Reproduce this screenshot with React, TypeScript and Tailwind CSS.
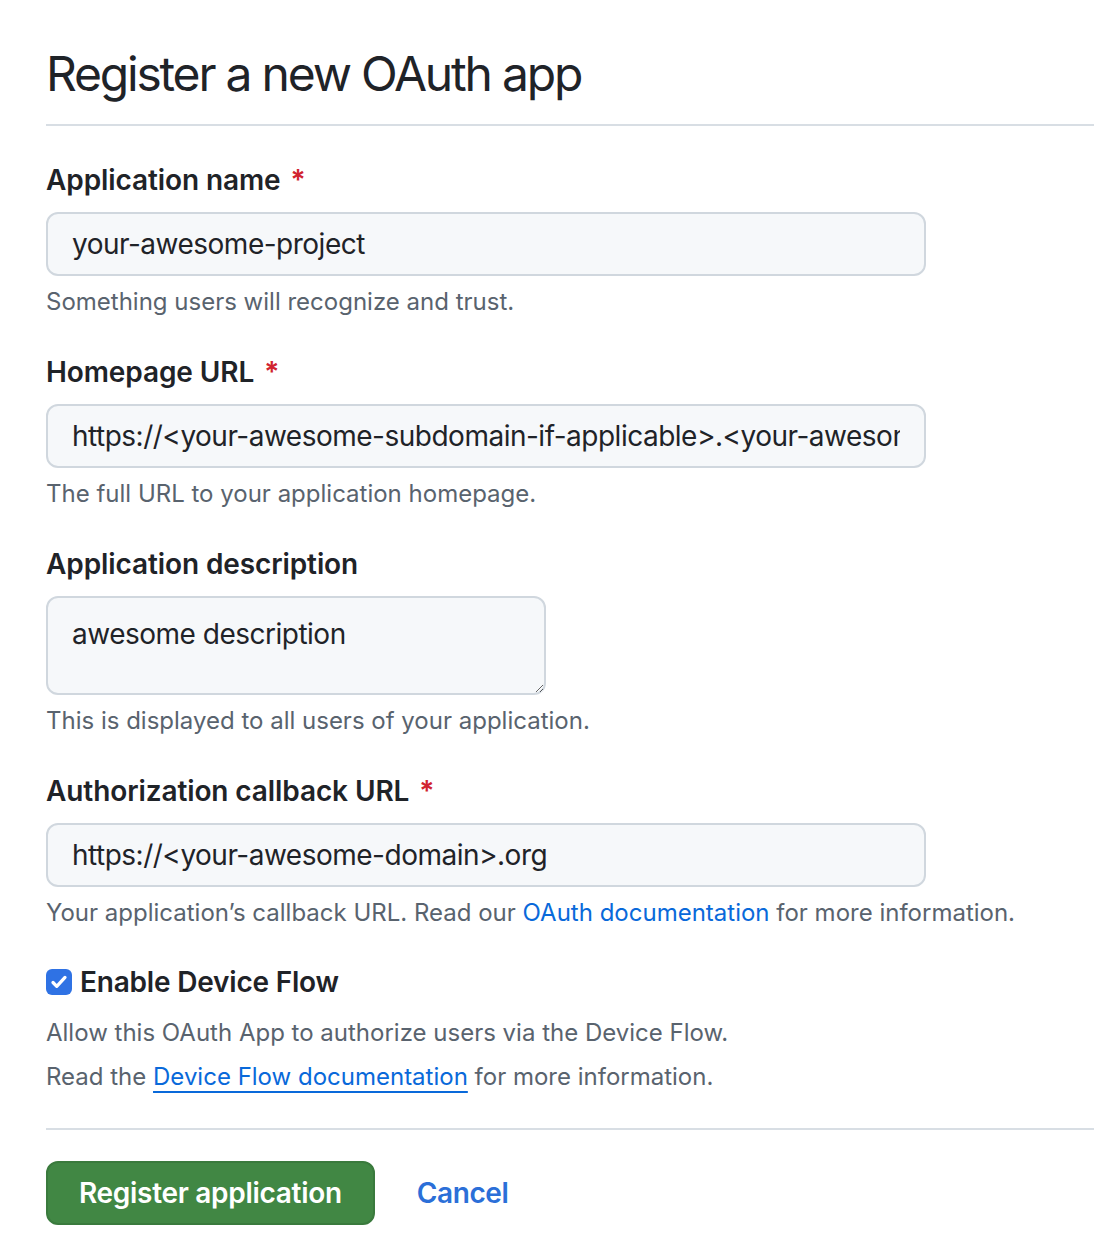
import React from "react";

const font = { fontFamily: "Inter, 'Noto Sans', 'Liberation Sans', sans-serif" };

const Required = () => <span className="ml-[10px] text-[#d1242f]">*</span>;

const Field = ({
  label,
  required,
  value,
  note,
  textarea,
  first,
}: {
  label: string;
  required?: boolean;
  value: string;
  note: React.ReactNode;
  textarea?: boolean;
  first?: boolean;
}) => {
  return (
    <div className={first ? "mt-[34px]" : "mt-[32px]"}>
      <label className="block text-[28px] leading-[40px] font-semibold tracking-[-0.1px] text-[#1f2328]">
        {label}
        {required && <Required />}
      </label>
      {textarea ? (
        <textarea
          readOnly
          defaultValue={value}
          className="mt-[12px] block h-[99px] w-[500px] rounded-[12px] border-2 border-[#d0d7de] bg-[#f6f8fa] px-[24px] py-[16px] text-[28px] leading-[40px] tracking-[-0.5px] text-[#1f2328] outline-none"
        />
      ) : (
        <input
          readOnly
          defaultValue={value}
          className="mt-[12px] block h-[64px] w-[880px] rounded-[12px] border-2 border-[#d0d7de] bg-[#f6f8fa] px-[24px] text-[28px] tracking-[-0.5px] text-[#1f2328] outline-none"
        />
      )}
      <p className="mt-[8px] text-[24px] leading-[36px] text-[#59636e]">{note}</p>
    </div>
  );
};

export default function App() {
  return (
    <div className="min-h-[1246px] bg-white pl-[46px] pt-[44px]" style={font}>
      <h1 className="border-b-2 border-[#d8dee4] pb-[20px] text-[48px] leading-[60px] font-normal tracking-[-2.2px] text-[#1f2328]">
        Register a new OAuth app
      </h1>

      <Field
        first
        label="Application name"
        required
        value="your-awesome-project"
        note="Something users will recognize and trust."
      />
      <Field
        label="Homepage URL"
        required
        value="https://<your-awesome-subdomain-if-applicable>.<your-awesome-domain>.org"
        note="The full URL to your application homepage."
      />
      <Field
        label="Application description"
        value="awesome description"
        note="This is displayed to all users of your application."
        textarea
      />
      <Field
        label="Authorization callback URL"
        required
        value="https://<your-awesome-domain>.org"
        note={
          <>
            Your application’s callback URL. Read our{" "}
            <a className="text-[#0969da]">OAuth documentation</a> for more information.
          </>
        }
      />

      <div className="mt-[31px] flex items-center gap-[8px]">
        <span className="flex h-[26px] w-[26px] items-center justify-center rounded-[6px] bg-[#2f72e4]">
          <svg width="20" height="20" viewBox="0 0 16 16" fill="none">
            <path d="M3.2 8.4l3 3.1 6.6-7.2" stroke="white" strokeWidth="2.6" strokeLinecap="round" strokeLinejoin="round" />
          </svg>
        </span>
        <span className="text-[28px] leading-[40px] font-semibold tracking-[-0.2px] text-[#1f2328]">
          Enable Device Flow
        </span>
      </div>
      <p className="mt-[13px] text-[24px] leading-[36px] text-[#59636e]">
        Allow this OAuth App to authorize users via the Device Flow.
      </p>
      <p className="mt-[8px] text-[24px] leading-[36px] text-[#59636e]">
        Read the{" "}
        <a className="text-[#0969da] underline decoration-2 underline-offset-[6px]">Device Flow documentation</a>{" "}
        for more information.
      </p>

      <div className="mt-[33px] border-t-2 border-[#d8dee4]" />

      <div className="mt-[31px] flex items-center gap-[42px]">
        <button className="h-[64px] rounded-[12px] border-2 border-[#3a7a3d] bg-[#418744] px-[31px] text-[28px] font-semibold tracking-[-0.3px] text-white">
          Register application
        </button>
        <a className="text-[28px] font-semibold tracking-[-0.4px] text-[#2b6fd8]">Cancel</a>
      </div>
    </div>
  );
}
